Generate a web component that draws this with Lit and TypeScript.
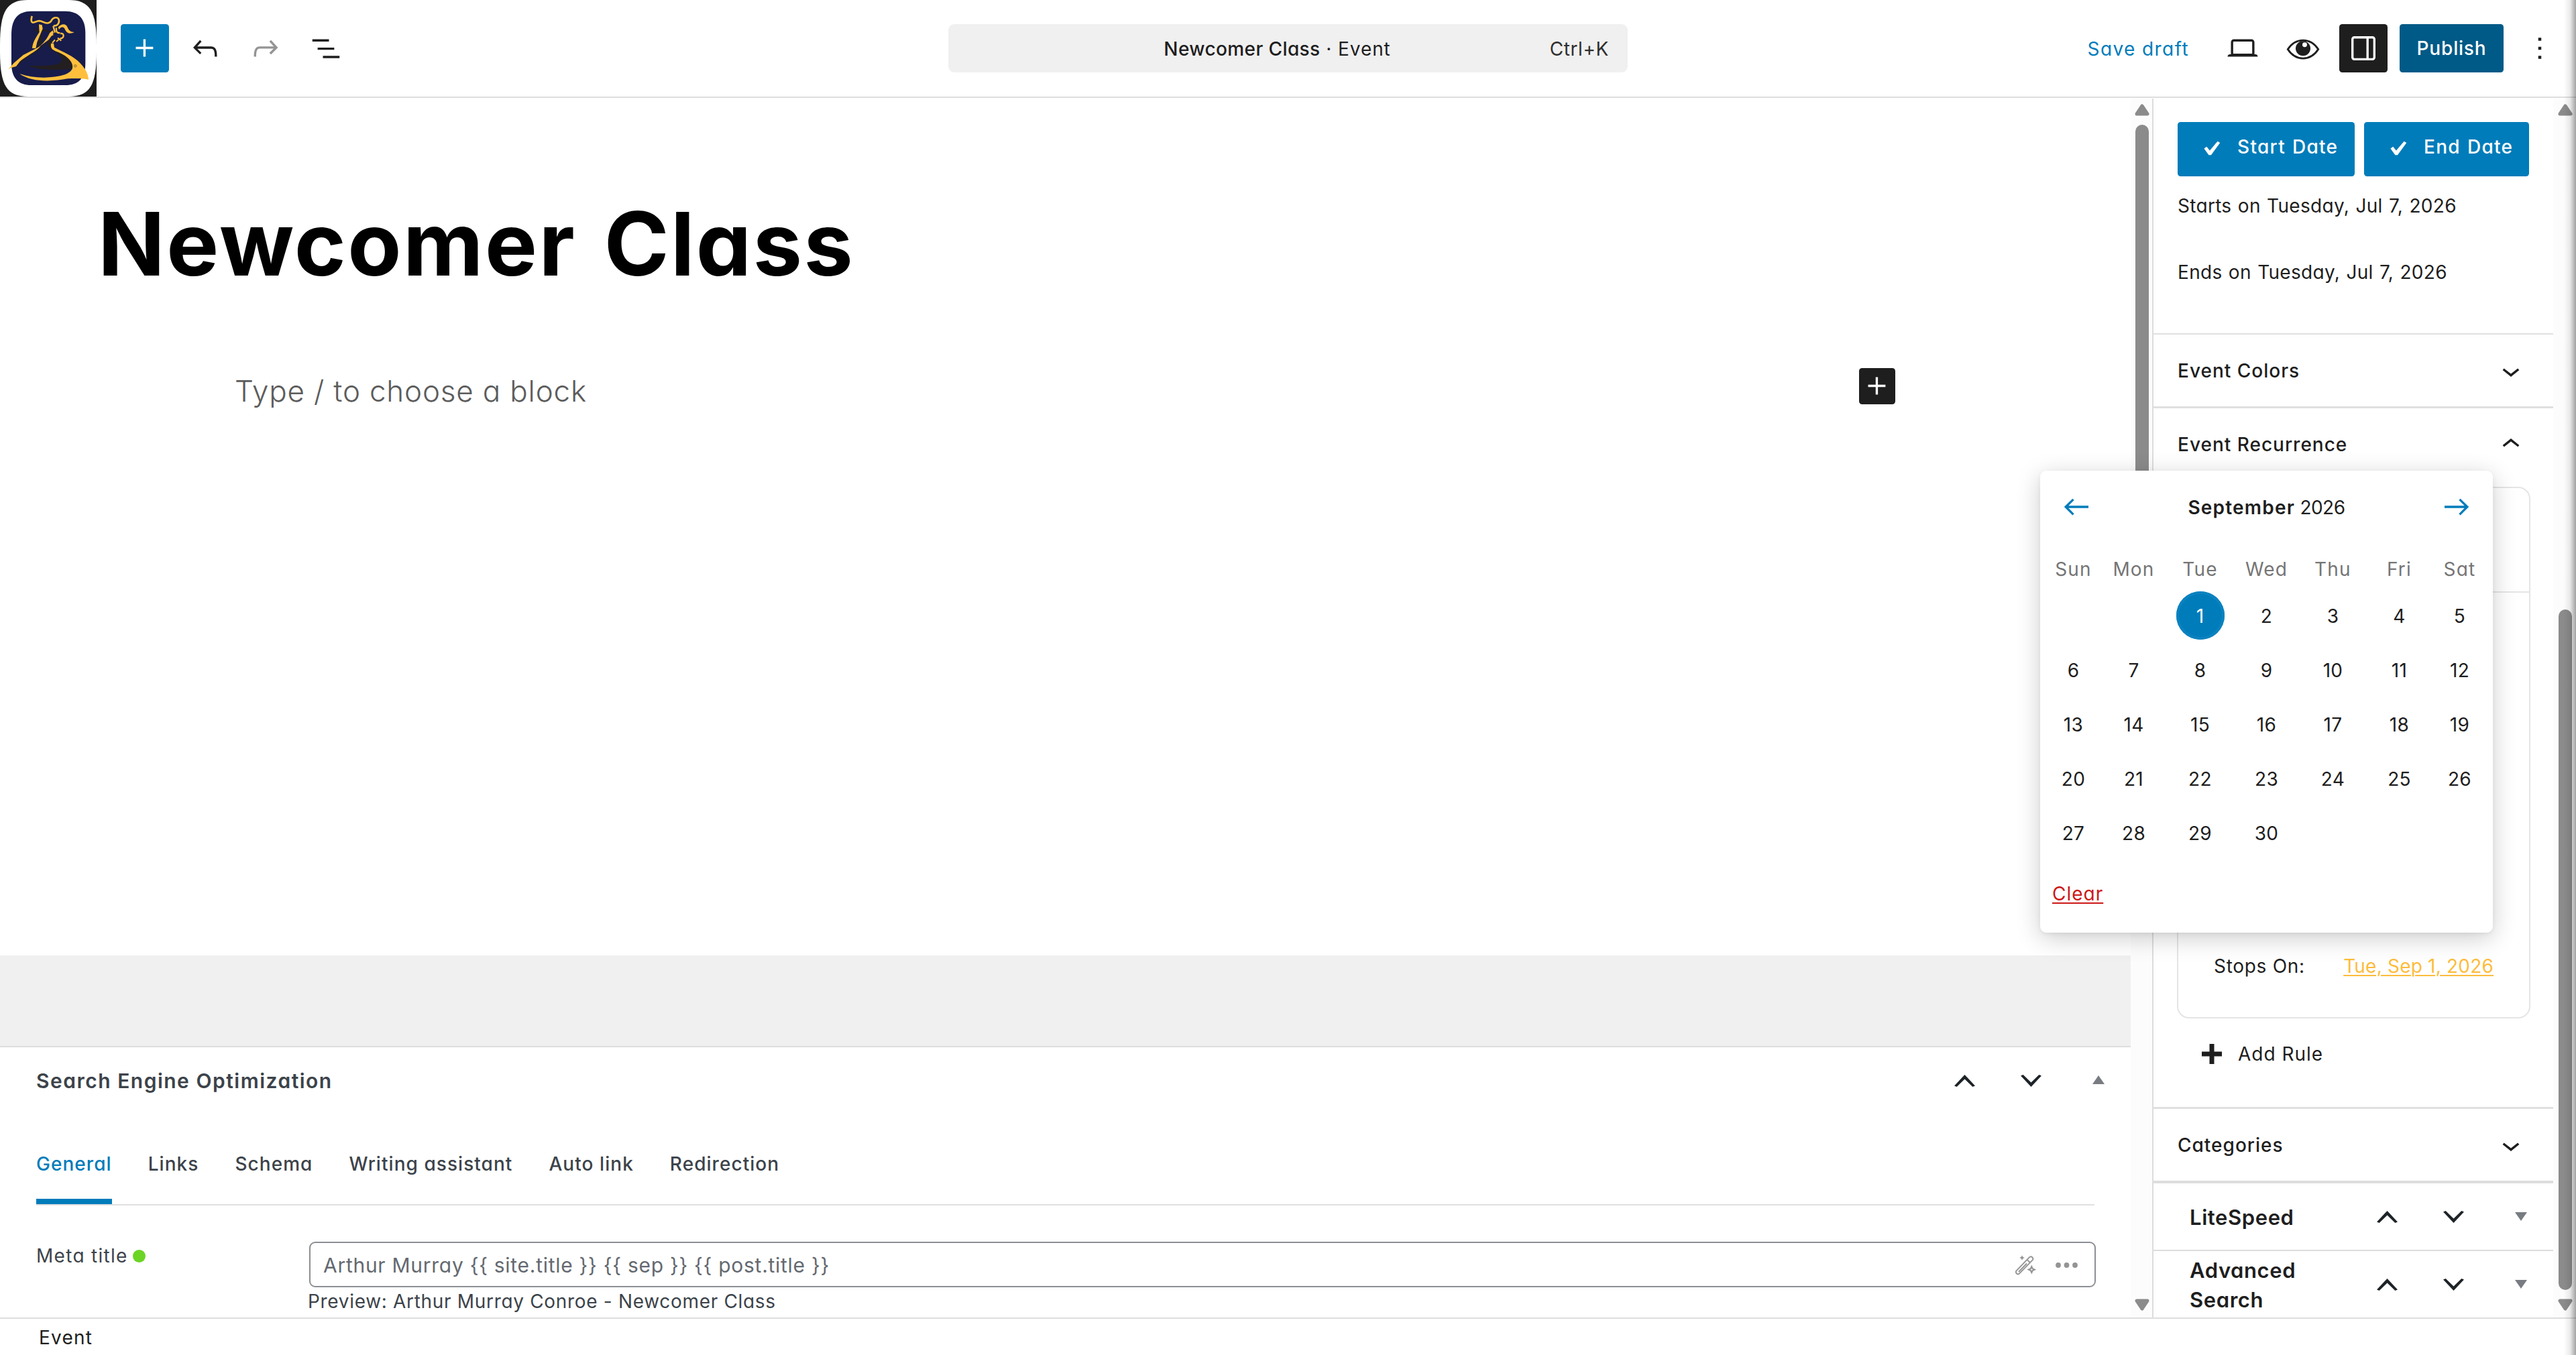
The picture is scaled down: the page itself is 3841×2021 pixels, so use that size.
import { LitElement, html, css, svg } from 'lit';
import { customElement, property } from 'lit/decorators.js';
import { classMap } from 'lit/directives/class-map.js';

const ICONS = {
  plus: svg`<path d="M11 12.5V17.5H12.5V12.5H17.5V11H12.5V6H11V11H6V12.5H11Z" />`,
  undo: svg`<path d="M18.3 11.7c-.6-.6-1.4-.9-2.3-.9H6.7l2.9-3.3-1.1-1-4.5 5L8.5 16l1-1-2.7-2.7H16c.5 0 .9.2 1.3.5 1 1 1 3.4 1 4.5v.3h1.5v-.2c0-1.5 0-4.3-1.5-5.7z" />`,
  redo: svg`<path d="M15.6 6.5l-1.1 1 2.9 3.3H8c-.9 0-1.7.3-2.3.9-1.4 1.5-1.4 4.2-1.4 5.6v.2h1.5v-.3c0-1.1 0-3.5 1-4.5.3-.3.7-.5 1.3-.5h9.2L14.5 15l1.1 1.1 4.6-4.6-4.6-5z" />`,
  list: svg`<path d="M3 6h11v1.5H3zM6.5 11.5h11V13h-11zM10 17h11v1.5H10z" />`,
  laptop: svg`<path d="M20.5 16h-.7V8c0-1.1-.9-2-2-2H6.2c-1.1 0-2 .9-2 2v8h-.7c-.8 0-1.5.7-1.5 1.5h20c0-.8-.7-1.5-1.5-1.5zM5.7 8c0-.3.2-.5.5-.5h11.6c.3 0 .5.2.5.5v7.6H5.7V8z" />`,
  eye: svg`
    <path d="M1.9 12.7C4.3 9 8 6.7 12 6.7s7.7 2.3 10.1 6C19.7 16.4 16 18.7 12 18.7S4.3 16.4 1.9 12.7z" fill="none" stroke="currentColor" stroke-width="1.25" />
    <circle cx="12" cy="12.1" r="4.9" />
    <circle cx="13.1" cy="9.7" r="1.55" fill="#fff" />`,
  drawer: svg`<path d="M18 4H6c-1.1 0-2 .9-2 2v12c0 1.1.9 2 2 2h12c1.1 0 2-.9 2-2V6c0-1.1-.9-2-2-2zm-4 14.5H6c-.3 0-.5-.2-.5-.5V6c0-.3.2-.5.5-.5h8v13zm4.5-.5c0 .3-.2.5-.5.5h-2.5v-13H18c.3 0 .5.2.5.5v12z" />`,
  more: svg`<path d="M13 19h-2v-2h2v2zm0-6h-2v-2h2v2zm0-6h-2V5h2v2z" />`,
  chevronDown: svg`<path d="M17.5 11.6L12 16l-5.5-4.4.9-1.2L12 14l4.5-3.6 1 1.2z" />`,
  chevronUp: svg`<path d="M6.5 12.4L12 8l5.5 4.4-.9 1.2L12 10l-4.5 3.6-1-1.2z" />`,
  arrowLeft: svg`<path d="M20 11.2H6.8l3.7-3.7-1-1L3.9 12l5.6 5.5 1-1-3.7-3.7H20z" />`,
  arrowRight: svg`<path d="M14.5 6.5l-1 1 3.7 3.7H4v1.6h13.2l-3.7 3.7 1 1 5.6-5.5z" />`,
  check: svg`<path d="M6.4 12.2L8.1 11l2.1 2.5 5.2-6.1 1.6 1-5.9 8.1H9.500z" />`,
};

type IconName = keyof typeof ICONS;

/** 24-unit glyph drawn at the size of its host. */
@customElement('wp-icon')
export class WpIcon extends LitElement {
  static styles = css`
    :host {
      display: block;
      flex-shrink: 0;
      width: 54px;
      height: 54px;
    }

    svg {
      display: block;
      width: 100%;
      height: 100%;
      fill: currentColor;
    }
  `;

  @property() name: IconName = 'plus';

  render() {
    return html`<svg viewBox="0 0 24 24" aria-hidden="true">${ICONS[this.name]}</svg>`;
  }
}

/** Move up, move down and collapse controls of a meta box. */
@customElement('meta-handles')
export class MetaHandles extends LitElement {
  static styles = css`
    :host {
      display: flex;
      flex-shrink: 0;
      color: #1d2327;
    }

    .cell {
      width: 99px;
      display: flex;
      justify-content: center;
      align-items: center;
    }

    .cell:last-child {
      padding-left: 3px;
      box-sizing: border-box;
    }

    svg {
      display: block;
    }

    .toggle {
      fill: #787c82;
    }
  `;

  @property({ type: Boolean }) open = false;

  render() {
    return html`
      <div class="cell">
        <svg width="31" height="18" viewBox="0 0 31 18">
          <path d="M0 16.5 15.5 0 31 16.5 27.3 18 15.5 6.5 3.7 18z" fill="currentColor" />
        </svg>
      </div>
      <div class="cell">
        <svg width="31" height="18" viewBox="0 0 31 18">
          <path d="M0 1.5 15.5 18 31 1.5 27.3 0 15.5 11.5 3.7 0z" fill="currentColor" />
        </svg>
      </div>
      <div class="cell">
        <svg class="toggle" width="18" height="15" viewBox="0 0 18 15">
          ${this.open ? svg`<path d="M0 13 9 0l9 13z" />` : svg`<path d="M0 1h18L9 14z" />`}
        </svg>
      </div>
    `;
  }
}

/** Always-visible scrollbar track with end arrows. */
@customElement('scroll-track')
export class ScrollTrack extends LitElement {
  static styles = css`
    :host {
      display: flex;
      flex-direction: column;
      align-items: center;
      box-sizing: border-box;
      background: #fcfcfc;
      padding: 8px 0 10px 1px;
    }

    svg {
      display: block;
      flex-shrink: 0;
      fill: #8b8b8b;
      stroke: #8b8b8b;
      stroke-width: 5;
      stroke-linejoin: round;
    }

    .lane {
      flex: 1;
      width: 20px;
      display: flex;
      flex-direction: column;
    }

    .thumb {
      width: 20px;
      border-radius: 10px;
      background: #8b8b8b;
    }
  `;

  @property({ type: Number }) start = 0;
  @property({ type: Number }) length = 0;

  render() {
    return html`
      <svg width="22" height="18" viewBox="0 0 22 18"><path d="M11 3 19 15H3z" /></svg>
      <div class="lane">
        <div class="thumb" style="margin-top:${this.start}px;height:${this.length}px"></div>
      </div>
      <svg width="22" height="18" viewBox="0 0 22 18"><path d="M3 3h16l-8 12z" /></svg>
    `;
  }
}

/** Month picker shown above the recurrence rule. */
@customElement('date-popover')
export class DatePopover extends LitElement {
  static styles = css`
    :host {
      display: block;
      box-sizing: border-box;
      width: 675px;
      height: 689px;
      padding: 27px 9px 0;
      border-radius: 9px;
      background: #fff;
      box-shadow:
        0 2px 6px rgba(0, 0, 0, 0.06),
        0 8px 36px rgba(0, 0, 0, 0.2);
      color: #1e1e1e;
    }

    header {
      display: flex;
      align-items: center;
      justify-content: space-between;
      padding: 0 18px;
      letter-spacing: -0.5px;
    }

    header span {
      padding-top: 2px;
    }

    header wp-icon {
      color: #007cba;
    }

    strong {
      font-weight: 600;
      letter-spacing: 1.2px;
    }

    .grid {
      display: grid;
      grid-template-columns: 81px repeat(5, 99px) 81px;
      justify-items: center;
    }

    .weekdays {
      margin-top: 45px;
      line-height: 43px;
      color: #757575;
      letter-spacing: 1.2px;
    }

    .days {
      margin-top: 11px;
      row-gap: 9px;
      letter-spacing: 0.3px;
    }

    .day {
      width: 72px;
      height: 72px;
      line-height: 74px;
      text-align: center;
      border-radius: 50%;
    }

    .first {
      grid-column: 3;
    }

    .selected {
      background: #007cba;
      box-shadow: inset 0 0 0 4px #0a82c0;
      color: #fff;
    }

    .clear {
      display: inline-block;
      margin: 34px 0 0 9px;
      line-height: 42px;
      color: #cc1818;
      letter-spacing: 1px;
      text-decoration: underline;
      text-decoration-thickness: 2px;
      text-underline-offset: 3px;
    }
  `;

  render() {
    const days = Array.from({ length: 30 }, (_, i) => i + 1);
    return html`
      <header>
        <wp-icon name="arrowLeft"></wp-icon>
        <span><strong>September</strong> 2026</span>
        <wp-icon name="arrowRight"></wp-icon>
      </header>
      <div class="grid weekdays">
        ${['Sun', 'Mon', 'Tue', 'Wed', 'Thu', 'Fri', 'Sat'].map((d) => html`<span>${d}</span>`)}
      </div>
      <div class="grid days">
        ${days.map(
          (d) => html`<span class=${classMap({ day: true, first: d === 1, selected: d === 1 })}>${d}</span>`,
        )}
      </div>
      <a class="clear">Clear</a>
    `;
  }
}

@customElement('app-root')
export class AppRoot extends LitElement {
  static styles = css`
    :host {
      position: relative;
      display: grid;
      grid-template-rows: 147px 1818px 56px;
      width: 3841px;
      height: 2021px;
      overflow: hidden;
      background: #fff;
      color: #1e1e1e;
      font: 400 28px/42px Inter, 'Open Sans', sans-serif;
      font-feature-settings: 'cv11' 1;
      white-space: nowrap;
    }

    /* Top bar */
    .topbar {
      display: grid;
      grid-template-columns: 1fr 1013px 1fr;
      align-items: center;
      box-sizing: border-box;
      border-bottom: 2px solid #ddd;
      height: 146px;
    }

    .tools {
      display: flex;
      align-items: center;
      gap: 18px;
    }

    .tools.end {
      justify-content: flex-end;
      padding-right: 18px;
    }

    .logo {
      display: block;
      width: 144px;
      height: 144px;
      margin-right: 18px;
    }

    .btn {
      display: flex;
      align-items: center;
      justify-content: center;
      width: 72px;
      height: 72px;
      border-radius: 4.5px;
    }

    .btn.primary {
      background: #007cba;
      color: #fff;
    }

    .btn.muted {
      color: #949494;
    }

    .btn.pressed {
      background: #1e1e1e;
      color: #fff;
    }

    .btn.publish {
      width: 155px;
      background: #005a87;
      color: #fff;
      font-weight: 500;
      line-height: 74px;
      letter-spacing: 0.8px;
    }

    .save {
      padding: 2px 26px 0 0;
      color: #007cba;
      letter-spacing: 1.4px;
    }

    .command {
      display: grid;
      grid-template-columns: 1fr auto 1fr;
      align-items: center;
      box-sizing: border-box;
      height: 72px;
      padding: 2px 28px 0;
      border-radius: 9px;
      background: #f0f0f0;
      letter-spacing: 0.9px;
    }

    .command .name {
      grid-column: 2;
      padding-right: 32px;
    }

    .command b {
      font-weight: 500;
      letter-spacing: 0.4px;
    }

    .command kbd {
      font: inherit;
      letter-spacing: 0.6px;
      color: #2f2f2f;
      justify-self: end;
    }

    /* Work area */
    .work {
      display: grid;
      grid-template-columns: 3177px 32px 598px 34px;
      min-height: 0;
    }

    .main {
      display: flex;
      flex-direction: column;
      min-height: 0;
      overflow: hidden;
    }

    .canvas {
      height: 1278px;
      flex-shrink: 0;
      display: flex;
      flex-direction: column;
    }

    h1 {
      margin: 137px 0 0 146px;
      font-size: 131px;
      font-weight: 700;
      line-height: 160px;
      letter-spacing: 2.4px;
      word-spacing: 8px;
      color: #000;
    }

    .appender {
      display: flex;
      justify-content: space-between;
      align-items: center;
      width: 2476px;
      margin: 98px 0 0 350px;
    }

    .prompt {
      padding-top: 14px;
      font-size: 44px;
      line-height: 54px;
      font-weight: 300;
      letter-spacing: 0.8px;
      color: #5c5c5c;
    }

    .appender .btn {
      width: 54px;
      height: 54px;
    }

    .gap {
      height: 135px;
      flex-shrink: 0;
      background: #f0f0f0;
    }

    /* SEO meta box */
    .metabox {
      border-top: 2px solid #ddd;
      color: #3c434a;
    }

    .metabox > header {
      display: flex;
      justify-content: space-between;
      height: 99px;
      padding-left: 54px;
    }

    h2 {
      margin: 0;
      font-size: 30px;
      font-weight: 600;
      line-height: 100px;
      letter-spacing: 1.5px;
    }

    .tabs {
      display: flex;
      gap: 54px;
      margin: 0 54px;
      padding-top: 45px;
      border-bottom: 2px solid #e0e0e0;
      font-weight: 500;
      letter-spacing: 1.05px;
    }

    .tab {
      padding-bottom: 22px;
      line-height: 60px;
      border-bottom: 8px solid transparent;
    }

    .tab.active {
      color: #007cba;
      border-color: #007cba;
    }

    .field {
      display: grid;
      grid-template-columns: 407px 2664px;
      margin: 54px 0 0 54px;
    }

    .label {
      display: flex;
      align-items: center;
      height: 42px;
      letter-spacing: 1.3px;
    }

    .dot {
      width: 19px;
      height: 19px;
      margin-left: 7px;
      border-radius: 50%;
      background: #6bd425;
    }

    .input {
      display: flex;
      align-items: center;
      box-sizing: border-box;
      height: 68px;
      padding: 1px 25px 0 19px;
      border: 2px solid #8c8f94;
      border-radius: 9px;
      font-size: 30px;
      letter-spacing: 0.72px;
      color: #646970;
    }

    .wand {
      margin-left: auto;
      margin-right: 29px;
    }

    .preview {
      margin-left: -2px;
      letter-spacing: 0.68px;
    }

    /* Settings sidebar */
    .sidebar {
      box-sizing: border-box;
      border-left: 2px solid #ddd;
      overflow: hidden;
    }

    .dates {
      padding: 35px 0 70px 36px;
      letter-spacing: 0.3px;
      word-spacing: 1.2px;
    }

    .dates .row {
      display: flex;
      gap: 14px;
      margin-bottom: 23px;
    }

    .date {
      display: flex;
      align-items: center;
      box-sizing: border-box;
      width: 264px;
      height: 81px;
      padding: 0 0 8px 25px;
      border-radius: 4.5px;
      background: #007cba;
      color: #fff;
      font-weight: 500;
      letter-spacing: 1.3px;
    }

    .date.short {
      width: 246px;
    }

    .date wp-icon {
      margin: 4px 10px 0 0;
    }

    .dates p {
      margin: 0;
    }

    .dates p + p {
      margin-top: 57px;
    }

    .panel {
      display: flex;
      align-items: center;
      justify-content: space-between;
      height: 107px;
      padding: 0 36px;
      border-top: 3px solid #e0e0e0;
      font-weight: 500;
      letter-spacing: 1px;
    }

    .panel span {
      padding-top: 1px;
    }

    .panel.thin {
      border-top-width: 2px;
    }

    .rule {
      display: flex;
      flex-direction: column;
      box-sizing: border-box;
      width: 527px;
      height: 793px;
      margin: 10px 0 0 35px;
      border: 2px solid #e5e5e5;
      border-radius: 18px;
    }

    .rule-head {
      height: 154px;
      border-bottom: 2px solid #e5e5e5;
    }

    .stops {
      display: flex;
      justify-content: space-between;
      margin-top: auto;
      padding: 0 53px 55px;
      letter-spacing: 0.7px;
    }

    .stops a {
      color: #fdbc3c;
      letter-spacing: 0.2px;
      text-decoration: underline;
      text-decoration-thickness: 2px;
      text-underline-offset: 3px;
    }

    .add {
      display: flex;
      align-items: center;
      gap: 24px;
      padding: 32px 0 58px 72px;
      letter-spacing: 1px;
    }

    .box {
      display: flex;
      justify-content: space-between;
      height: 99px;
      padding-left: 54px;
      border-top: 2px solid #ddd;
    }

    .box.top {
      border-top-width: 4px;
    }

    .box h3 {
      align-self: center;
      width: 200px;
      margin: 2px 0 0;
      font-size: 31px;
      font-weight: 600;
      line-height: 44px;
      letter-spacing: 0.6px;
      white-space: normal;
    }

    /* Footer */
    .footer {
      box-sizing: border-box;
      padding-left: 58px;
      border-top: 2px solid #ddd;
      line-height: 56px;
      letter-spacing: 1.2px;
    }

    date-popover {
      position: absolute;
      left: 3042px;
      top: 702px;
    }

    /* Window edge shade */
    .edge {
      position: absolute;
      top: 0;
      right: 0;
      width: 18px;
      height: 100%;
      background: linear-gradient(to right, rgba(0, 0, 0, 0), rgba(0, 0, 0, 0.08) 50%, rgba(0, 0, 0, 0.36));
      pointer-events: none;
    }
  `;

  private _logo() {
    return html`
      <svg class="logo" viewBox="0 0 432 432" aria-hidden="true">
        <rect width="432" height="432" fill="#1e1e1e" />
        <path d="M0 200C0 50 30 0 125 0H307C402 0 432 50 432 200V232C432 382 402 432 307 432H125C30 432 0 382 0 232z" fill="#fff" />
        <path d="M51 155C51 82 82 51 140 50H292C352 51 382 82 382 150V282C382 350 352 381 292 381H140C82 381 51 350 51 282z" fill="#171c4b" />
        <g fill="#231f20">
          <path d="M212 188C208 222 272 232 276 266C278 290 228 296 124 293C178 316 258 314 324 308C328 280 300 250 264 232L230 214L236 190L226 176z" />
          <path d="M214 186L166 222L112 250L74 296L98 276C130 244 180 226 214 186z" />
          <path d="M186 140L164 216L176 214L190 190z" />
        </g>
        <path d="M158 126C160 144 172 142 188 136C204 132 212 146 230 138" fill="none" stroke="#231f20" stroke-width="7" />
        <g fill="#ffbf3c">
          <path d="M174 109L188 112L191 128L166 188L160 216H144C146 190 158 172 176 144z" />
          <path d="M182 206L104 246L62 282L36 311L50 303L72 297L90 274C120 248 160 232 182 206z" />
          <path d="M228 194L240 194L243 212C280 232 330 250 358 282C386 312 394 332 396 356C374 350 340 350 302 352C230 366 140 368 88 330C150 352 230 352 290 334C310 326 320 316 324 306C330 280 304 252 262 234C240 224 224 222 228 194z" />
          <path d="M236 136L240 148L218 178L166 216C194 196 212 172 222 148z" />
          <path d="M260 122C274 104 296 104 302 122C308 138 318 142 332 144C318 152 300 152 292 134C286 118 274 118 264 132z" />
        </g>
        <g fill="none" stroke="#ffbf3c">
          <path d="M143 72C138 88 138 104 152 100C170 94 174 90 192 98C212 108 222 104 230 92C240 74 264 74 264 94C264 108 252 118 240 114" stroke-width="8" />
          <path d="M238 116L246 146M252 124C250 148 258 146 268 148M270 150C290 146 288 174 268 172" stroke-width="7" />
          <path d="M216 164L238 154M258 170L274 182M234 192L246 178M252 186L262 178" stroke-width="6" />
        </g>
        <circle cx="337" cy="295" r="5.5" fill="none" stroke="#5b4a20" stroke-width="2" />
        <circle cx="337" cy="295" r="1.5" fill="#5b4a20" />
      </svg>
    `;
  }

  private _topbar() {
    return html`
      <header class="topbar">
        <div class="tools">
          ${this._logo()}
          <div class="btn primary"><wp-icon name="plus"></wp-icon></div>
          <div class="btn"><wp-icon name="undo"></wp-icon></div>
          <div class="btn muted"><wp-icon name="redo"></wp-icon></div>
          <div class="btn"><wp-icon name="list"></wp-icon></div>
        </div>
        <div class="command">
          <span class="name"><b>Newcomer Class</b> · Event</span>
          <kbd>Ctrl+K</kbd>
        </div>
        <div class="tools end">
          <span class="save">Save draft</span>
          <div class="btn"><wp-icon name="laptop"></wp-icon></div>
          <div class="btn"><wp-icon name="eye"></wp-icon></div>
          <div class="btn pressed"><wp-icon name="drawer"></wp-icon></div>
          <div class="btn publish">Publish</div>
          <div class="btn"><wp-icon name="more"></wp-icon></div>
        </div>
      </header>
    `;
  }

  private _seo() {
    const tabs = ['General', 'Links', 'Schema', 'Writing assistant', 'Auto link', 'Redirection'];
    return html`
      <section class="metabox">
        <header>
          <h2>Search Engine Optimization</h2>
          <meta-handles open></meta-handles>
        </header>
        <nav class="tabs">
          ${tabs.map((t, i) => html`<span class=${classMap({ tab: true, active: i === 0 })}>${t}</span>`)}
        </nav>
        <div class="field">
          <div class="label">Meta title<span class="dot"></span></div>
          <div>
            <div class="input">
              <span>Arthur Murray {{ site.title }} {{ sep }} {{ post.title }}</span>
              <svg class="wand" width="31" height="30" viewBox="0 0 31 30" fill="none" stroke="#949494" stroke-width="1.9">
                <path d="M1.8 23.2 20.8 3.4a3.1 3.1 0 0 1 4.6 4.3L6.2 27.3a2.9 2.9 0 0 1-4.4-4.1zM17.6 6.8l4.2 4.2M5 25 17 12.500" />
                <path d="M24.3 17.2l1.4 3 3 1.4-3 1.4-1.4 3-1.4-3-3-1.4 3-1.4z" stroke-width="2.2" />
                <path d="M10 .2l1.2 2.6L13.8 4l-2.6 1.2L10 7.8 8.8 5.2 6.2 4l2.6-1.2z" fill="#949494" stroke="none" />
              </svg>
              <svg width="33" height="8" viewBox="0 0 33 8" fill="#949494">
                <circle cx="4" cy="4" r="3.9" /><circle cx="16.5" cy="4" r="3.9" /><circle cx="29" cy="4" r="3.9" />
              </svg>
            </div>
            <div class="preview">Preview: Arthur Murray Conroe - Newcomer Class</div>
          </div>
        </div>
      </section>
    `;
  }

  private _panel(title: string, open = false, thin = false) {
    return html`
      <div class=${classMap({ panel: true, thin })}>
        <span>${title}</span>
        <wp-icon name=${open ? 'chevronUp' : 'chevronDown'}></wp-icon>
      </div>
    `;
  }

  private _box(title: string, top = false) {
    return html`
      <div class=${classMap({ box: true, top })}>
        <h3>${title}</h3>
        <meta-handles></meta-handles>
      </div>
    `;
  }

  private _sidebar() {
    return html`
      <aside class="sidebar">
        <div class="dates">
          <div class="row">
            <div class="date"><wp-icon name="check"></wp-icon>Start Date</div>
            <div class="date short"><wp-icon name="check"></wp-icon>End Date</div>
          </div>
          <p>Starts on Tuesday, Jul 7, 2026</p>
          <p>Ends on Tuesday, Jul 7, 2026</p>
        </div>
        ${this._panel('Event Colors', false, true)}
        ${this._panel('Event Recurrence', true)}
        <div class="rule">
          <div class="rule-head"></div>
          <div class="stops"><span>Stops On:</span><a>Tue, Sep 1, 2026</a></div>
        </div>
        <div class="add">
          <svg width="30" height="30" viewBox="0 0 30 30"><path d="M15 0v30M0 15h30" stroke="#1e1e1e" stroke-width="7" /></svg>
          <span>Add Rule</span>
        </div>
        ${this._panel('Categories')}
        ${this._box('LiteSpeed', true)}
        ${this._box('Advanced Search')}
      </aside>
    `;
  }

  render() {
    return html`
      ${this._topbar()}
      <div class="work">
        <main class="main">
          <div class="canvas">
            <h1>Newcomer Class</h1>
            <div class="appender">
              <span class="prompt">Type / to choose a block</span>
              <div class="btn pressed"><wp-icon name="plus"></wp-icon></div>
            </div>
          </div>
          <div class="gap"></div>
          ${this._seo()}
        </main>
        <scroll-track .start=${13} .length=${1180}></scroll-track>
        ${this._sidebar()}
        <scroll-track .start=${736} .length=${1015}></scroll-track>
      </div>
      <footer class="footer">Event</footer>
      <date-popover></date-popover>
      <div class="edge"></div>
    `;
  }
}

declare global {
  interface HTMLElementTagNameMap {
    'app-root': AppRoot;
    'wp-icon': WpIcon;
    'meta-handles': MetaHandles;
    'scroll-track': ScrollTrack;
    'date-popover': DatePopover;
  }
}
